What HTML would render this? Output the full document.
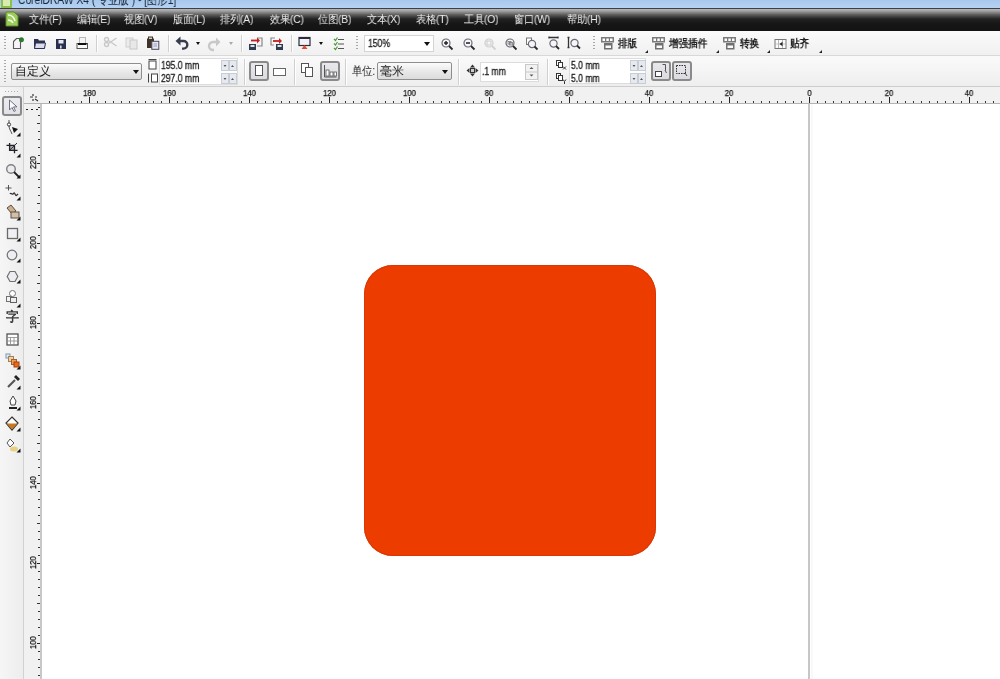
<!DOCTYPE html><html><head><meta charset="utf-8"><style>
*{margin:0;padding:0;box-sizing:border-box}
html,body{width:1000px;height:679px;overflow:hidden;background:#f0f0f0;font-family:"Liberation Sans",sans-serif;position:relative}
.t,.rl,.rv,#menu span,#title span{will-change:transform}
.a{position:absolute}
svg{position:absolute;overflow:visible}
#title{left:0;top:0;width:1000px;height:8px;background:linear-gradient(#a8c8ee,#b6d2f2);overflow:hidden}
#title span{position:absolute;left:18px;top:-7px;font-size:13px;line-height:14px;color:#1a2a3a;white-space:nowrap;transform:scaleX(0.79);transform-origin:0 0}
#menu{left:0;top:8px;width:1000px;height:23px;background:linear-gradient(#3c4048 0,#3c4048 1px,#b8b8b8 1px,#a0a0a0 3px,#585858 7px,#222 11px,#161616 16px,#141414 23px)}
#menu span{position:absolute;top:5px;color:#f0f0f0;font-size:11px;line-height:13px;white-space:nowrap;letter-spacing:-0.2px;transform:scaleX(0.93);transform-origin:0 0}
#tb1{left:0;top:31px;width:1000px;height:25px;background:linear-gradient(#fbfbfb,#f0f0f0);border-bottom:1px solid #d8d8d8}
#tb2{left:0;top:56px;width:1000px;height:31px;background:linear-gradient(#fafafa,#eeeeee);border-bottom:1px solid #cdcdcd}
#rulh{left:24px;top:87px;width:976px;height:17px;background:#f1f1f1;border-bottom:1px solid #b4b4b4}
#tbox{left:0;top:87px;width:24px;height:592px;background:linear-gradient(90deg,#f6f6f6,#ededed);border-right:1px solid #d2d2d2}
#rulv{left:24px;top:104px;width:18px;height:575px;background:#f1f1f1;border-right:2px solid #c8c8c8}
#canvas{left:42px;top:104px;width:959px;height:575px;background:#fff}
#pline{left:808px;top:104px;width:2px;height:575px;background:#c6c6c6;box-shadow:3px 0 0 #f9f9f9}
#rect{left:364px;top:265px;width:292px;height:291px;border-radius:29px;background:#ec3c00;box-shadow:inset 0 0 0 1px #d83804}
.sep{position:absolute;width:2px;border-left:1px solid #d0d0d0;border-right:1px solid #fff}
.grip{position:absolute;width:2px;background:repeating-linear-gradient(#a8a8a8 0 1px,transparent 1px 3px)}
.t{position:absolute;white-space:nowrap;color:#1a1a1a}
.box{position:absolute;background:#fff;border:1px solid #c8c8c8}
.btnp{position:absolute;border:2px solid #8a8a8a;border-radius:3px;background:linear-gradient(#e8e8ec,#dcdce0)}
.rl{position:absolute;font-size:9px;line-height:9px;color:#111;white-space:nowrap;transform:scaleX(0.86);-webkit-text-stroke:0.25px #111}
.rv{position:absolute;font-size:9px;line-height:9px;color:#111;white-space:nowrap;transform:rotate(-90deg) scaleX(0.85);transform-origin:0 0;-webkit-text-stroke:0.25px #111}
.tbt{top:37px;font-size:11px;line-height:13px;font-weight:bold;color:#202020;transform:scaleX(0.87);transform-origin:0 0}
.tri{position:absolute;width:0;height:0;border-left:3px solid transparent;border-right:3px solid transparent;border-top:3px solid #111}
</style></head><body>
<div id="title" class="a"><svg width="12" height="8" style="left:1px;top:0"><rect x="0" y="-4" width="11" height="12" fill="#8cc04a"/><rect x="2" y="-4" width="7" height="10" fill="#d8ecb0"/></svg><span>CorelDRAW X4 ( 专业版 ) - [图形1]</span></div>
<div id="menu" class="a">
<svg width="14" height="16" style="left:5px;top:3px"><path d="M1 1h8l4 4v10H1z" fill="#9ccc5a" stroke="#5a8a2a" stroke-width="1"/><path d="M3 4c3 0 6 2 7 6M3 9c2 0 4 1 5 3" stroke="#f4fce8" stroke-width="1.6" fill="none"/></svg>
<span style="left:29px">文件(F)</span>
<span style="left:77px">编辑(E)</span>
<span style="left:124px">视图(V)</span>
<span style="left:173px">版面(L)</span>
<span style="left:220px">排列(A)</span>
<span style="left:270px">效果(C)</span>
<span style="left:318px">位图(B)</span>
<span style="left:367px">文本(X)</span>
<span style="left:416px">表格(T)</span>
<span style="left:464px">工具(O)</span>
<span style="left:514px">窗口(W)</span>
<span style="left:567px">帮助(H)</span>
</div>
<div id="tb1" class="a"></div>
<div id="tb2" class="a"></div>
<div id="tbox" class="a"></div>
<div id="rulh" class="a"></div>
<div id="rulv" class="a"></div>
<div id="canvas" class="a"></div>
<div id="pline" class="a"></div>
<div id="rect" class="a"></div>
<svg width="1000" height="679" style="left:0;top:0"><rect x="49" y="101" width="1" height="2" fill="#333"/><rect x="57" y="101" width="1" height="2" fill="#333"/><rect x="65" y="101" width="1" height="2" fill="#333"/><rect x="73" y="101" width="1" height="2" fill="#333"/><rect x="81" y="101" width="1" height="2" fill="#333"/><rect x="89" y="97" width="1" height="6" fill="#222"/><rect x="97" y="101" width="1" height="2" fill="#333"/><rect x="105" y="101" width="1" height="2" fill="#333"/><rect x="113" y="101" width="1" height="2" fill="#333"/><rect x="121" y="101" width="1" height="2" fill="#333"/><rect x="129" y="101" width="1" height="2" fill="#333"/><rect x="137" y="101" width="1" height="2" fill="#333"/><rect x="145" y="101" width="1" height="2" fill="#333"/><rect x="153" y="101" width="1" height="2" fill="#333"/><rect x="161" y="101" width="1" height="2" fill="#333"/><rect x="169" y="97" width="1" height="6" fill="#222"/><rect x="177" y="101" width="1" height="2" fill="#333"/><rect x="185" y="101" width="1" height="2" fill="#333"/><rect x="193" y="101" width="1" height="2" fill="#333"/><rect x="201" y="101" width="1" height="2" fill="#333"/><rect x="209" y="101" width="1" height="2" fill="#333"/><rect x="217" y="101" width="1" height="2" fill="#333"/><rect x="225" y="101" width="1" height="2" fill="#333"/><rect x="233" y="101" width="1" height="2" fill="#333"/><rect x="241" y="101" width="1" height="2" fill="#333"/><rect x="249" y="97" width="1" height="6" fill="#222"/><rect x="257" y="101" width="1" height="2" fill="#333"/><rect x="265" y="101" width="1" height="2" fill="#333"/><rect x="273" y="101" width="1" height="2" fill="#333"/><rect x="281" y="101" width="1" height="2" fill="#333"/><rect x="289" y="101" width="1" height="2" fill="#333"/><rect x="297" y="101" width="1" height="2" fill="#333"/><rect x="305" y="101" width="1" height="2" fill="#333"/><rect x="313" y="101" width="1" height="2" fill="#333"/><rect x="321" y="101" width="1" height="2" fill="#333"/><rect x="329" y="97" width="1" height="6" fill="#222"/><rect x="337" y="101" width="1" height="2" fill="#333"/><rect x="345" y="101" width="1" height="2" fill="#333"/><rect x="353" y="101" width="1" height="2" fill="#333"/><rect x="361" y="101" width="1" height="2" fill="#333"/><rect x="369" y="101" width="1" height="2" fill="#333"/><rect x="377" y="101" width="1" height="2" fill="#333"/><rect x="385" y="101" width="1" height="2" fill="#333"/><rect x="393" y="101" width="1" height="2" fill="#333"/><rect x="401" y="101" width="1" height="2" fill="#333"/><rect x="409" y="97" width="1" height="6" fill="#222"/><rect x="417" y="101" width="1" height="2" fill="#333"/><rect x="425" y="101" width="1" height="2" fill="#333"/><rect x="433" y="101" width="1" height="2" fill="#333"/><rect x="441" y="101" width="1" height="2" fill="#333"/><rect x="449" y="101" width="1" height="2" fill="#333"/><rect x="457" y="101" width="1" height="2" fill="#333"/><rect x="465" y="101" width="1" height="2" fill="#333"/><rect x="473" y="101" width="1" height="2" fill="#333"/><rect x="481" y="101" width="1" height="2" fill="#333"/><rect x="489" y="97" width="1" height="6" fill="#222"/><rect x="497" y="101" width="1" height="2" fill="#333"/><rect x="505" y="101" width="1" height="2" fill="#333"/><rect x="513" y="101" width="1" height="2" fill="#333"/><rect x="521" y="101" width="1" height="2" fill="#333"/><rect x="529" y="101" width="1" height="2" fill="#333"/><rect x="537" y="101" width="1" height="2" fill="#333"/><rect x="545" y="101" width="1" height="2" fill="#333"/><rect x="553" y="101" width="1" height="2" fill="#333"/><rect x="561" y="101" width="1" height="2" fill="#333"/><rect x="569" y="97" width="1" height="6" fill="#222"/><rect x="577" y="101" width="1" height="2" fill="#333"/><rect x="585" y="101" width="1" height="2" fill="#333"/><rect x="593" y="101" width="1" height="2" fill="#333"/><rect x="601" y="101" width="1" height="2" fill="#333"/><rect x="609" y="101" width="1" height="2" fill="#333"/><rect x="617" y="101" width="1" height="2" fill="#333"/><rect x="625" y="101" width="1" height="2" fill="#333"/><rect x="633" y="101" width="1" height="2" fill="#333"/><rect x="641" y="101" width="1" height="2" fill="#333"/><rect x="649" y="97" width="1" height="6" fill="#222"/><rect x="657" y="101" width="1" height="2" fill="#333"/><rect x="665" y="101" width="1" height="2" fill="#333"/><rect x="673" y="101" width="1" height="2" fill="#333"/><rect x="681" y="101" width="1" height="2" fill="#333"/><rect x="689" y="101" width="1" height="2" fill="#333"/><rect x="697" y="101" width="1" height="2" fill="#333"/><rect x="705" y="101" width="1" height="2" fill="#333"/><rect x="713" y="101" width="1" height="2" fill="#333"/><rect x="721" y="101" width="1" height="2" fill="#333"/><rect x="729" y="97" width="1" height="6" fill="#222"/><rect x="737" y="101" width="1" height="2" fill="#333"/><rect x="745" y="101" width="1" height="2" fill="#333"/><rect x="753" y="101" width="1" height="2" fill="#333"/><rect x="761" y="101" width="1" height="2" fill="#333"/><rect x="769" y="101" width="1" height="2" fill="#333"/><rect x="777" y="101" width="1" height="2" fill="#333"/><rect x="785" y="101" width="1" height="2" fill="#333"/><rect x="793" y="101" width="1" height="2" fill="#333"/><rect x="801" y="101" width="1" height="2" fill="#333"/><rect x="809" y="97" width="1" height="6" fill="#222"/><rect x="817" y="101" width="1" height="2" fill="#333"/><rect x="825" y="101" width="1" height="2" fill="#333"/><rect x="833" y="101" width="1" height="2" fill="#333"/><rect x="841" y="101" width="1" height="2" fill="#333"/><rect x="849" y="101" width="1" height="2" fill="#333"/><rect x="857" y="101" width="1" height="2" fill="#333"/><rect x="865" y="101" width="1" height="2" fill="#333"/><rect x="873" y="101" width="1" height="2" fill="#333"/><rect x="881" y="101" width="1" height="2" fill="#333"/><rect x="889" y="97" width="1" height="6" fill="#222"/><rect x="897" y="101" width="1" height="2" fill="#333"/><rect x="905" y="101" width="1" height="2" fill="#333"/><rect x="913" y="101" width="1" height="2" fill="#333"/><rect x="921" y="101" width="1" height="2" fill="#333"/><rect x="929" y="101" width="1" height="2" fill="#333"/><rect x="937" y="101" width="1" height="2" fill="#333"/><rect x="945" y="101" width="1" height="2" fill="#333"/><rect x="953" y="101" width="1" height="2" fill="#333"/><rect x="961" y="101" width="1" height="2" fill="#333"/><rect x="969" y="97" width="1" height="6" fill="#222"/><rect x="977" y="101" width="1" height="2" fill="#333"/><rect x="985" y="101" width="1" height="2" fill="#333"/><rect x="993" y="101" width="1" height="2" fill="#333"/><rect x="38" y="107" width="2" height="1" fill="#333"/><rect x="38" y="115" width="2" height="1" fill="#333"/><rect x="37" y="123" width="3" height="1" fill="#333"/><rect x="38" y="131" width="2" height="1" fill="#333"/><rect x="38" y="139" width="2" height="1" fill="#333"/><rect x="38" y="147" width="2" height="1" fill="#333"/><rect x="38" y="155" width="2" height="1" fill="#333"/><rect x="37" y="163" width="3" height="1" fill="#222"/><rect x="38" y="171" width="2" height="1" fill="#333"/><rect x="38" y="179" width="2" height="1" fill="#333"/><rect x="38" y="187" width="2" height="1" fill="#333"/><rect x="38" y="195" width="2" height="1" fill="#333"/><rect x="37" y="203" width="3" height="1" fill="#333"/><rect x="38" y="211" width="2" height="1" fill="#333"/><rect x="38" y="219" width="2" height="1" fill="#333"/><rect x="38" y="227" width="2" height="1" fill="#333"/><rect x="38" y="235" width="2" height="1" fill="#333"/><rect x="37" y="243" width="3" height="1" fill="#222"/><rect x="38" y="251" width="2" height="1" fill="#333"/><rect x="38" y="259" width="2" height="1" fill="#333"/><rect x="38" y="267" width="2" height="1" fill="#333"/><rect x="38" y="275" width="2" height="1" fill="#333"/><rect x="37" y="283" width="3" height="1" fill="#333"/><rect x="38" y="291" width="2" height="1" fill="#333"/><rect x="38" y="299" width="2" height="1" fill="#333"/><rect x="38" y="307" width="2" height="1" fill="#333"/><rect x="38" y="315" width="2" height="1" fill="#333"/><rect x="37" y="323" width="3" height="1" fill="#222"/><rect x="38" y="331" width="2" height="1" fill="#333"/><rect x="38" y="339" width="2" height="1" fill="#333"/><rect x="38" y="347" width="2" height="1" fill="#333"/><rect x="38" y="355" width="2" height="1" fill="#333"/><rect x="37" y="363" width="3" height="1" fill="#333"/><rect x="38" y="371" width="2" height="1" fill="#333"/><rect x="38" y="379" width="2" height="1" fill="#333"/><rect x="38" y="387" width="2" height="1" fill="#333"/><rect x="38" y="395" width="2" height="1" fill="#333"/><rect x="37" y="403" width="3" height="1" fill="#222"/><rect x="38" y="411" width="2" height="1" fill="#333"/><rect x="38" y="419" width="2" height="1" fill="#333"/><rect x="38" y="427" width="2" height="1" fill="#333"/><rect x="38" y="435" width="2" height="1" fill="#333"/><rect x="37" y="443" width="3" height="1" fill="#333"/><rect x="38" y="451" width="2" height="1" fill="#333"/><rect x="38" y="459" width="2" height="1" fill="#333"/><rect x="38" y="467" width="2" height="1" fill="#333"/><rect x="38" y="475" width="2" height="1" fill="#333"/><rect x="37" y="483" width="3" height="1" fill="#222"/><rect x="38" y="491" width="2" height="1" fill="#333"/><rect x="38" y="499" width="2" height="1" fill="#333"/><rect x="38" y="507" width="2" height="1" fill="#333"/><rect x="38" y="515" width="2" height="1" fill="#333"/><rect x="37" y="523" width="3" height="1" fill="#333"/><rect x="38" y="531" width="2" height="1" fill="#333"/><rect x="38" y="539" width="2" height="1" fill="#333"/><rect x="38" y="547" width="2" height="1" fill="#333"/><rect x="38" y="555" width="2" height="1" fill="#333"/><rect x="37" y="563" width="3" height="1" fill="#222"/><rect x="38" y="571" width="2" height="1" fill="#333"/><rect x="38" y="579" width="2" height="1" fill="#333"/><rect x="38" y="587" width="2" height="1" fill="#333"/><rect x="38" y="595" width="2" height="1" fill="#333"/><rect x="37" y="603" width="3" height="1" fill="#333"/><rect x="38" y="611" width="2" height="1" fill="#333"/><rect x="38" y="619" width="2" height="1" fill="#333"/><rect x="38" y="627" width="2" height="1" fill="#333"/><rect x="38" y="635" width="2" height="1" fill="#333"/><rect x="37" y="643" width="3" height="1" fill="#222"/><rect x="38" y="651" width="2" height="1" fill="#333"/><rect x="38" y="659" width="2" height="1" fill="#333"/><rect x="38" y="667" width="2" height="1" fill="#333"/><rect x="38" y="675" width="2" height="1" fill="#333"/></svg>
<div class="rl" style="left:81.5px;top:89px;width:15px;text-align:center">180</div>
<div class="rl" style="left:161.5px;top:89px;width:15px;text-align:center">160</div>
<div class="rl" style="left:241.5px;top:89px;width:15px;text-align:center">140</div>
<div class="rl" style="left:321.5px;top:89px;width:15px;text-align:center">120</div>
<div class="rl" style="left:401.5px;top:89px;width:15px;text-align:center">100</div>
<div class="rl" style="left:484.0px;top:89px;width:10px;text-align:center">80</div>
<div class="rl" style="left:564.0px;top:89px;width:10px;text-align:center">60</div>
<div class="rl" style="left:644.0px;top:89px;width:10px;text-align:center">40</div>
<div class="rl" style="left:724.0px;top:89px;width:10px;text-align:center">20</div>
<div class="rl" style="left:806.5px;top:89px;width:5px;text-align:center">0</div>
<div class="rl" style="left:884.0px;top:89px;width:10px;text-align:center">20</div>
<div class="rl" style="left:964.0px;top:89px;width:10px;text-align:center">40</div>
<div class="rv" style="left:29px;top:168.5px;width:15px;text-align:center">220</div>
<div class="rv" style="left:29px;top:248.5px;width:15px;text-align:center">200</div>
<div class="rv" style="left:29px;top:328.5px;width:15px;text-align:center">180</div>
<div class="rv" style="left:29px;top:408.5px;width:15px;text-align:center">160</div>
<div class="rv" style="left:29px;top:488.5px;width:15px;text-align:center">140</div>
<div class="rv" style="left:29px;top:568.5px;width:15px;text-align:center">120</div>
<div class="rv" style="left:29px;top:648.5px;width:15px;text-align:center">100</div>
<div class="grip" style="left:4px;top:36px;height:15px"></div>
<svg width="13" height="14" style="left:12px;top:36px"><path d="M1.5 5.5L4.5 2.5H8.5V12.5H1.5Z" fill="#f6f4f8" stroke="#5a5a5a" stroke-width="1.1"/><circle cx="9.4" cy="3.8" r="2.5" fill="#2e7a2e"/></svg>
<svg width="14" height="13" style="left:33px;top:37px"><path d="M1 2h4l1 1.5h6v8H1z" fill="#2a3450"/><path d="M2.5 6h10l-1 5.5h-10z" fill="#dcdcec" stroke="#2a3450"/></svg>
<svg width="10" height="10" style="left:56px;top:39px"><rect x="0" y="0" width="10" height="10" fill="#2a3050"/><rect x="2.5" y="1" width="5" height="3.5" fill="#e8e8f4"/><rect x="4" y="6.5" width="1.6" height="3" fill="#dcdcec"/></svg>
<svg width="12" height="14" style="left:76px;top:36px"><rect x="3.5" y="1.5" width="6" height="6" fill="#f4f4f4" stroke="#b8b8b8"/><rect x="1" y="7.5" width="10.5" height="5" fill="#fafafa" stroke="#555"/><rect x="2" y="7" width="8.5" height="2" fill="#111"/></svg>
<div class="sep" style="left:96px;top:35px;height:17px"></div>
<svg width="15" height="14" style="left:103px;top:36px"><circle cx="3.5" cy="8.5" r="2" fill="none" stroke="#c8c8c8" stroke-width="1.4"/><circle cx="3.5" cy="3.5" r="2" fill="none" stroke="#c8c8c8" stroke-width="1.4"/><path d="M5.5 7.5l8-5.5M5.5 4.5l8 5.5" stroke="#c8c8c8" stroke-width="1.3"/></svg>
<svg width="14" height="13" style="left:125px;top:37px"><rect x="1" y="1" width="7" height="9" fill="#ececec" stroke="#cfcfcf"/><rect x="5" y="3" width="7" height="9" fill="#e8e8e8" stroke="#c8c8c8"/></svg>
<svg width="15" height="14" style="left:146px;top:36px"><rect x="1" y="2.5" width="7" height="9.5" fill="#3e342c"/><rect x="2.5" y="1" width="4" height="2.5" fill="#d8d0c0" stroke="#3e342c"/><rect x="5.8" y="5.3" width="7" height="8" fill="#e4e6f2" stroke="#4a4a5a"/><path d="M7.5 8h3.5M7.5 10h3.5" stroke="#9a9ab8"/></svg>
<div class="sep" style="left:168px;top:35px;height:17px"></div>
<svg width="15" height="14" style="left:175px;top:36px"><path d="M4 5h4.5a3.8 3.8 0 0 1 0 7.6H7" fill="none" stroke="#383c4c" stroke-width="2.4"/><path d="M0.5 5l5-4.5v9z" fill="#383c4c"/></svg>
<div class="tri" style="left:196px;top:42px;border-left-width:2.5px;border-right-width:2.5px;border-top-color:#111"></div>
<svg width="13" height="13" style="left:208px;top:37px"><path d="M9 5H5a4 4 0 0 0 0 8h1" fill="none" stroke="#c8c8c8" stroke-width="2.4"/><path d="M12.5 5l-4.5-4.5v9z" fill="#c8c8c8"/></svg>
<div class="tri" style="left:229px;top:42px;border-left-width:2.5px;border-right-width:2.5px;border-top-color:#aaa"></div>
<div class="sep" style="left:241px;top:35px;height:17px"></div>
<svg width="16" height="15" style="left:248px;top:36px"><path d="M9 2h5v8H9" fill="none" stroke="#888" stroke-width="1.2"/><path d="M3 4.5h7" stroke="#c42020" stroke-width="1.8"/><path d="M12 4.5l-3-3v6z" fill="#c42020"/><rect x="1" y="8" width="7" height="6" fill="#2e3a4e"/><rect x="2.5" y="9" width="4" height="2" fill="#e0e0e0"/></svg>
<svg width="16" height="15" style="left:269px;top:36px"><path d="M6 2H2v7h3" fill="none" stroke="#888" stroke-width="1.2"/><path d="M4 5h7" stroke="#c42020" stroke-width="1.8"/><path d="M13 5l-3-3v6z" fill="#c42020"/><rect x="7" y="8" width="7" height="6" fill="#2e3a4e"/><rect x="8.5" y="9" width="4" height="2" fill="#e0e0e0"/></svg>
<div class="sep" style="left:291px;top:35px;height:17px"></div>
<svg width="14" height="15" style="left:298px;top:36px"><rect x="1" y="1.5" width="11" height="8" fill="#f2f2f6" stroke="#2c2c3c" stroke-width="1.2"/><rect x="1" y="1" width="11" height="2" fill="#2c2c3c"/><path d="M6.5 9l-3 4h6z" fill="#e04a2a"/></svg>
<div class="tri" style="left:319px;top:42px;border-left-width:2.5px;border-right-width:2.5px;border-top-color:#111"></div>
<svg width="12" height="15" style="left:333px;top:36px"><path d="M1 3l1.5 1.5 2-3M1 7.5l1.5 1.5 2-3M1 12l1.5 1.5 2-3" stroke="#4a9a3a" fill="none" stroke-width="1.2"/><path d="M5 3.5h6M5 8h6M5 12.5h6" stroke="#555" stroke-width="1"/></svg>
<div class="grip" style="left:356px;top:36px;height:15px"></div>
<div class="box" style="left:364px;top:35px;width:70px;height:17px;border-color:#d4d4d4"></div>
<div class="t" style="left:368px;top:38px;font-size:10px;line-height:11px;transform:scaleX(0.86);transform-origin:0 0;-webkit-text-stroke:0.3px #1a1a1a">150%</div>
<div class="tri" style="left:424px;top:42px;border-left-width:3.5px;border-right-width:3.5px;border-top-width:4px"></div>
<svg width="13" height="13" style="left:441px;top:38px"><circle cx="5" cy="5" r="4" fill="#f6f6fa" stroke="#6a6a74" stroke-width="1.2"/><path d="M3 5h4M5 3v4" stroke="#222" stroke-width="1.4"/><path d="M8 8l3.5 3.5" stroke="#2a2a2a" stroke-width="1.8"/></svg>
<svg width="13" height="13" style="left:463px;top:38px"><circle cx="5" cy="5" r="4" fill="#f6f6fa" stroke="#6a6a74" stroke-width="1.2"/><path d="M3 5h4" stroke="#111" stroke-width="1.4"/><path d="M8 8l3.5 3.5" stroke="#2a2a2a" stroke-width="1.8"/></svg>
<svg width="13" height="13" style="left:484px;top:38px"><circle cx="5" cy="5" r="4" fill="#f6f6fa" stroke="#cfcfcf" stroke-width="1.2"/><rect x="3" y="3" width="4" height="4" fill="none" stroke="#ccc"/><path d="M8 8l3.5 3.5" stroke="#d0d0d0" stroke-width="1.8"/></svg>
<svg width="13" height="13" style="left:505px;top:38px"><circle cx="5" cy="5" r="4" fill="#f6f6fa" stroke="#6a6a74" stroke-width="1.2"/><rect x="3" y="3.5" width="3" height="2.5" fill="none" stroke="#777" stroke-width="0.8"/><rect x="4.5" y="4.5" width="3" height="2.5" fill="none" stroke="#777" stroke-width="0.8"/><path d="M8 8l3.5 3.5" stroke="#2a2a2a" stroke-width="1.8"/></svg>
<svg width="14" height="14" style="left:525px;top:36px"><rect x="1.5" y="2" width="5" height="6.5" fill="#fff" stroke="#777"/><circle cx="7" cy="8" r="3.6" fill="#f6f6fa" stroke="#6a6a74" stroke-width="1.2"/><path d="M9.5 10.5l3 3" stroke="#2a2a2a" stroke-width="1.8"/></svg>
<svg width="13" height="14" style="left:548px;top:36px"><path d="M0.5 1.5h10M1 0.5v2M10 0.5v2" stroke="#333" stroke-width="1.3"/><circle cx="5.5" cy="7.5" r="3.6" fill="#f6f6fa" stroke="#6a6a74" stroke-width="1.2"/><path d="M8 10l3 3" stroke="#2a2a2a" stroke-width="1.8"/></svg>
<svg width="15" height="14" style="left:567px;top:36px"><path d="M1.5 1v11M0.5 1.5h2M0.5 11.5h2" stroke="#333" stroke-width="1.3"/><circle cx="7.5" cy="7" r="3.6" fill="#f6f6fa" stroke="#6a6a74" stroke-width="1.2"/><path d="M10 9.5l3 3" stroke="#2a2a2a" stroke-width="1.8"/></svg>
<div class="grip" style="left:593px;top:36px;height:15px"></div>
<svg width="15" height="14" style="left:600px;top:36px"><rect x="1" y="1" width="13" height="5.5" fill="#7a7a7a"/><rect x="2.5" y="2.5" width="2.5" height="2.5" fill="#fff"/><rect x="6.3" y="2.5" width="2.5" height="2.5" fill="#fff"/><rect x="10" y="2.5" width="2.5" height="2.5" fill="#fff"/><rect x="4" y="7" width="8.5" height="6.5" fill="#707070"/><rect x="5.5" y="9.5" width="5.5" height="2.5" fill="#fbfbfb"/></svg>
<div class="t tbt" style="left:618px">排版</div>
<div class="tri" style="left:645px;top:50px;border-left:0;border-right:3px solid #222;border-top:3px solid transparent"></div>
<svg width="15" height="14" style="left:651px;top:36px"><rect x="1" y="1" width="13" height="5.5" fill="#7a7a7a"/><rect x="2.5" y="2.5" width="2.5" height="2.5" fill="#fff"/><rect x="6.3" y="2.5" width="2.5" height="2.5" fill="#fff"/><rect x="10" y="2.5" width="2.5" height="2.5" fill="#fff"/><rect x="4" y="7" width="8.5" height="6.5" fill="#707070"/><rect x="5.5" y="9.5" width="5.5" height="2.5" fill="#fbfbfb"/></svg>
<div class="t tbt" style="left:669px">增强插件</div>
<div class="tri" style="left:716px;top:50px;border-left:0;border-right:3px solid #222;border-top:3px solid transparent"></div>
<svg width="15" height="14" style="left:722px;top:36px"><rect x="1" y="1" width="13" height="5.5" fill="#7a7a7a"/><rect x="2.5" y="2.5" width="2.5" height="2.5" fill="#fff"/><rect x="6.3" y="2.5" width="2.5" height="2.5" fill="#fff"/><rect x="10" y="2.5" width="2.5" height="2.5" fill="#fff"/><rect x="4" y="7" width="8.5" height="6.5" fill="#707070"/><rect x="5.5" y="9.5" width="5.5" height="2.5" fill="#fbfbfb"/></svg>
<div class="t tbt" style="left:740px">转换</div>
<div class="tri" style="left:767px;top:50px;border-left:0;border-right:3px solid #222;border-top:3px solid transparent"></div>
<svg width="13" height="12" style="left:774px;top:38px"><rect x="1" y="1.5" width="11" height="9" fill="#fafafa" stroke="#777" stroke-width="1"/><path d="M4.5 1.5v9M8.5 1.5v9" stroke="#666" stroke-width="0.9" stroke-dasharray="1 1"/><path d="M1 6h11" stroke="#aaa" stroke-width="0.6"/><path d="M5.5 6l3-2.2v4.4z" fill="#222"/></svg>
<div class="t tbt" style="left:790px">贴齐</div>
<div class="tri" style="left:819px;top:50px;border-left:0;border-right:3px solid #222;border-top:3px solid transparent"></div>
<div class="grip" style="left:4px;top:60px;height:23px"></div>
<div class="a" style="left:11px;top:63px;width:131px;height:17px;border:1px solid #8e8e8e;border-radius:2px;background:linear-gradient(#fbfbfb,#e6e6e6 60%,#dcdcdc)"></div>
<div class="t" style="left:15px;top:65px;font-size:12px;line-height:13px">自定义</div>
<div class="tri" style="left:133px;top:70px;border-left-width:3.5px;border-right-width:3.5px;border-top-width:4px"></div>
<svg width="12" height="28" style="left:147px;top:58px"><rect x="2" y="3" width="7" height="8" fill="#fff" stroke="#444"/><path d="M1.5 1.5h8" stroke="#444"/><rect x="4.5" y="16" width="6" height="8" fill="#fff" stroke="#444"/><path d="M1.5 15.5v9" stroke="#444"/></svg>
<div class="box" style="left:159px;top:58px;width:79px;height:27px;border-color:#dcdcdc"></div>
<div class="t" style="left:161px;top:60px;font-size:10px;line-height:11px;transform:scaleX(0.86);transform-origin:0 0;-webkit-text-stroke:0.3px #1a1a1a">195.0 mm</div>
<div class="t" style="left:161px;top:73px;font-size:10px;line-height:11px;transform:scaleX(0.86);transform-origin:0 0;-webkit-text-stroke:0.3px #1a1a1a">297.0 mm</div>
<div class="a" style="left:221px;top:60px;width:8px;height:11px;border:1px solid #c8ccd4;background:#e6eaf0"></div>
<div class="a" style="left:229px;top:60px;width:8px;height:11px;border:1px solid #c8ccd4;background:#e6eaf0"></div>
<div class="a" style="left:221px;top:73px;width:8px;height:11px;border:1px solid #c8ccd4;background:#e6eaf0"></div>
<div class="a" style="left:229px;top:73px;width:8px;height:11px;border:1px solid #c8ccd4;background:#e6eaf0"></div>
<svg width="16" height="26" style="left:221px;top:60px"><path d="M2.5 5h3l-1.5 2z" fill="#555"/><path d="M10 7h3l-1.5-2z" fill="#555"/><path d="M2.5 18h3l-1.5 2z" fill="#555"/><path d="M10 20h3l-1.5-2z" fill="#555"/></svg>
<div class="sep" style="left:244px;top:59px;height:26px"></div>
<div class="btnp" style="left:249px;top:61px;width:20px;height:20px"></div>
<svg width="12" height="14" style="left:253px;top:64px"><rect x="2.5" y="1.5" width="7" height="10" fill="#fff" stroke="#555"/></svg>
<svg width="16" height="14" style="left:272px;top:64px"><rect x="1.5" y="4.5" width="12" height="7" fill="#fff" stroke="#666"/></svg>
<div class="sep" style="left:294px;top:59px;height:26px"></div>
<svg width="17" height="17" style="left:300px;top:62px"><rect x="1.5" y="1.5" width="7" height="9" fill="#fff" stroke="#555"/><rect x="5.5" y="5.5" width="7" height="9" fill="#fff" stroke="#555"/></svg>
<div class="btnp" style="left:320px;top:61px;width:20px;height:20px"></div>
<svg width="15" height="14" style="left:323px;top:64px"><path d="M1.5 1v12h12" fill="none" stroke="#555"/><rect x="3" y="6" width="3" height="6" fill="#fff" stroke="#555" stroke-width="0.8"/><rect x="7" y="8" width="3" height="4" fill="#fff" stroke="#555" stroke-width="0.8"/><rect x="11" y="8" width="2.5" height="4" fill="#fff" stroke="#555" stroke-width="0.8"/></svg>
<div class="sep" style="left:345px;top:59px;height:26px"></div>
<div class="t" style="left:352px;top:65px;font-size:12px;line-height:13px;transform:scaleX(0.85);transform-origin:0 0">单位:</div>
<div class="a" style="left:377px;top:62px;width:75px;height:18px;border:1px solid #8e8e8e;border-radius:2px;background:linear-gradient(#fbfbfb,#e6e6e6 60%,#dcdcdc)"></div>
<div class="t" style="left:380px;top:65px;font-size:12px;line-height:13px">毫米</div>
<div class="tri" style="left:442px;top:70px;border-left-width:3.5px;border-right-width:3.5px;border-top-width:4px"></div>
<div class="sep" style="left:458px;top:59px;height:26px"></div>
<svg width="13" height="13" style="left:466px;top:64px"><path d="M6.5 0.5l2.5 3h-5zM6.5 12.5l2.5-3h-5zM0.5 6.5l3-2.5v5zM12.5 6.5l-3-2.5v5z" fill="#333"/><rect x="4.5" y="4.5" width="4" height="4" fill="#ccc" stroke="#333"/></svg>
<div class="box" style="left:480px;top:62px;width:59px;height:20px;border-color:#dcdcdc"></div>
<div class="t" style="left:482px;top:66px;font-size:10px;line-height:11px;transform:scaleX(0.86);transform-origin:0 0;-webkit-text-stroke:0.3px #1a1a1a">.1 mm</div>
<div class="a" style="left:525px;top:64px;width:13px;height:16px;border:1px solid #c8c8c8;background:#f2f2f2"></div>
<svg width="13" height="16" style="left:525px;top:64px"><path d="M1 8h11" stroke="#c8c8c8"/><path d="M4.5 5l2-2 2 2z" fill="#555"/><path d="M4.5 10.5h4l-2 2z" fill="#555"/></svg>
<div class="sep" style="left:547px;top:59px;height:26px"></div>
<svg width="14" height="27" style="left:555px;top:59px"><rect x="1.5" y="1.5" width="4" height="5" fill="#fff" stroke="#333"/><rect x="3.5" y="3.5" width="4" height="5" fill="#fff" stroke="#333"/><path d="M8 7.5l3 3M11 7.5l-3 3" stroke="#333"/><rect x="1.5" y="14.5" width="4" height="5" fill="#fff" stroke="#333"/><rect x="3.5" y="16.5" width="4" height="5" fill="#fff" stroke="#333"/><path d="M8 20.5l1.5 2 1.5-2M9.5 22.5v2.5" stroke="#333" fill="none"/></svg>
<div class="box" style="left:569px;top:58px;width:77px;height:26px;border-color:#dcdcdc"></div>
<div class="t" style="left:571px;top:60px;font-size:10px;line-height:11px;transform:scaleX(0.86);transform-origin:0 0;-webkit-text-stroke:0.3px #1a1a1a">5.0 mm</div>
<div class="t" style="left:571px;top:73px;font-size:10px;line-height:11px;transform:scaleX(0.86);transform-origin:0 0;-webkit-text-stroke:0.3px #1a1a1a">5.0 mm</div>
<div class="a" style="left:630px;top:60px;width:8px;height:11px;border:1px solid #c8ccd4;background:#e6eaf0"></div>
<div class="a" style="left:638px;top:60px;width:8px;height:11px;border:1px solid #c8ccd4;background:#e6eaf0"></div>
<div class="a" style="left:630px;top:73px;width:8px;height:11px;border:1px solid #c8ccd4;background:#e6eaf0"></div>
<div class="a" style="left:638px;top:73px;width:8px;height:11px;border:1px solid #c8ccd4;background:#e6eaf0"></div>
<svg width="16" height="26" style="left:630px;top:60px"><path d="M2.5 5h3l-1.5 2z" fill="#555"/><path d="M10 7h3l-1.5-2z" fill="#555"/><path d="M2.5 18h3l-1.5 2z" fill="#555"/><path d="M10 20h3l-1.5-2z" fill="#555"/></svg>
<div class="btnp" style="left:651px;top:61px;width:20px;height:20px"></div>
<svg width="16" height="16" style="left:653px;top:63px"><rect x="2.5" y="8.5" width="6" height="5" fill="#fff" stroke="#444"/><path d="M9.5 1.5h3v6M12 7l1.5 3" stroke="#555" fill="none"/></svg>
<div class="btnp" style="left:672px;top:61px;width:20px;height:20px"></div>
<svg width="16" height="16" style="left:674px;top:63px"><rect x="2.5" y="2.5" width="9" height="8" fill="none" stroke="#333" stroke-dasharray="1.5 1"/><path d="M11 10l2 3" stroke="#444"/></svg>
<div class="a" style="left:5px;top:91px;width:15px;height:1px;background:repeating-linear-gradient(90deg,#b0b0b0 0 1px,transparent 1px 3px)"></div>
<div class="btnp" style="left:2px;top:96px;width:20px;height:20px;background:linear-gradient(#ececf0,#e2e2e6)"></div>
<svg width="10" height="14" style="left:8px;top:99px"><path d="M1.5 1v10l2.5-2.5 2 4 1.5-0.8-2-3.8h3.5z" fill="#fbfbff" stroke="#707080" stroke-width="1"/></svg>
<svg width="15" height="17" style="left:6px;top:119px"><path d="M3 1v3M3 7c0 3 2 5 3 8" stroke="#555" fill="none"/><circle cx="3" cy="5.5" r="1.6" fill="#fff" stroke="#333"/><path d="M6 8l6 2-4 4z" fill="#111"/></svg>
<svg width="5" height="5" style="left:16px;top:132px"><path d="M4.5 0.5v4h-4z" fill="#111"/></svg>
<svg width="16" height="15" style="left:5px;top:141px"><rect x="4.6" y="4.4" width="4.9" height="4.9" fill="#a8a8b8"/><path d="M1.5 4.4h8.5M4.6 2v7.3h8M9.5 4.4v7.8" stroke="#222" stroke-width="1.3" fill="none"/><path d="M4.6 9.3L12 2" stroke="#333" stroke-width="1"/></svg>
<svg width="5" height="5" style="left:16px;top:153px"><path d="M4.5 0.5v4h-4z" fill="#111"/></svg>
<svg width="16" height="15" style="left:5px;top:163px"><circle cx="6" cy="6" r="4.3" fill="#ececf0" stroke="#808080" stroke-width="1.4"/><path d="M9 9l5 5" stroke="#222" stroke-width="1.8"/></svg>
<svg width="5" height="5" style="left:16px;top:174px"><path d="M4.5 0.5v4h-4z" fill="#111"/></svg>
<svg width="17" height="16" style="left:5px;top:184px"><path d="M3.5 1v5.5M0.5 4h6" stroke="#555" stroke-width="1"/><path d="M5 10c1-2 2 1 3 0s1-2 2 0 1 2 3 0" stroke="#333" fill="none" stroke-width="1.3"/></svg>
<svg width="5" height="5" style="left:16px;top:196px"><path d="M4.5 0.5v4h-4z" fill="#111"/></svg>
<svg width="16" height="16" style="left:5px;top:204px"><path d="M2 4l4-3 5 6-4 3z" fill="#c8b090" stroke="#5a4a3a"/><rect x="6" y="8" width="8" height="6" fill="#d4c0a0" stroke="#5a5050"/></svg>
<svg width="5" height="5" style="left:16px;top:216px"><path d="M4.5 0.5v4h-4z" fill="#111"/></svg>
<svg width="15" height="14" style="left:6px;top:227px"><rect x="1.5" y="1.5" width="10" height="10" fill="#f0f0f4" stroke="#6a6a6a" stroke-width="1.3"/></svg>
<svg width="5" height="5" style="left:16px;top:237px"><path d="M4.5 0.5v4h-4z" fill="#111"/></svg>
<svg width="15" height="14" style="left:6px;top:249px"><ellipse cx="6" cy="6" rx="4.8" ry="4.8" fill="#eeeef2" stroke="#707070" stroke-width="1.2"/></svg>
<svg width="5" height="5" style="left:16px;top:258px"><path d="M4.5 0.5v4h-4z" fill="#111"/></svg>
<svg width="15" height="14" style="left:6px;top:270px"><path d="M4 1.5h5l2.8 5-2.8 5H4L1.2 6.5z" fill="#eeeef2" stroke="#707070" stroke-width="1.2"/></svg>
<svg width="5" height="5" style="left:16px;top:279px"><path d="M4.5 0.5v4h-4z" fill="#111"/></svg>
<svg width="16" height="17" style="left:5px;top:289px"><circle cx="7.5" cy="4.5" r="3" fill="#fff" stroke="#707070"/><rect x="1.5" y="7.5" width="5" height="5" fill="#f4f4f4" stroke="#707070"/><rect x="5.5" y="8.5" width="6" height="5" fill="#eeeef2" stroke="#606060"/></svg>
<svg width="5" height="5" style="left:16px;top:303px"><path d="M4.5 0.5v4h-4z" fill="#111"/></svg>
<div class="t" style="left:6px;top:310px;font-size:13px;line-height:14px;color:#3a3a3a;font-weight:bold">字</div>
<svg width="13" height="13" style="left:6px;top:333px"><rect x="1" y="1" width="11" height="11" fill="#fff" stroke="#555" stroke-width="1.3"/><path d="M1 4.5h11M1 8h11M4.5 4.5v7.5M8 4.5v7.5" stroke="#888" stroke-width="0.8"/></svg>
<svg width="17" height="16" style="left:5px;top:353px"><rect x="1" y="1" width="4" height="4" fill="#e4ecf4" stroke="#7a9aa8"/><rect x="3.5" y="3.5" width="5" height="5" fill="#f4d0a0" stroke="#a08060"/><rect x="6.5" y="6.5" width="5" height="5" fill="#f0a050" stroke="#a06030"/><rect x="9" y="9" width="5" height="5" fill="#e86a18" stroke="#a04010"/></svg>
<svg width="5" height="5" style="left:16px;top:365px"><path d="M4.5 0.5v4h-4z" fill="#111"/></svg>
<svg width="15" height="15" style="left:6px;top:374px"><path d="M2 13l7-7" stroke="#555" stroke-width="2.2"/><path d="M8 3l4 4 2-2-4-4z" fill="#222"/></svg>
<svg width="5" height="5" style="left:16px;top:385px"><path d="M4.5 0.5v4h-4z" fill="#111"/></svg>
<svg width="13" height="16" style="left:8px;top:395px"><path d="M5 1l3 5-1 4H3L2 6z" fill="#fff" stroke="#444"/><path d="M1 13h8" stroke="#222" stroke-width="2"/></svg>
<svg width="5" height="5" style="left:16px;top:406px"><path d="M4.5 0.5v4h-4z" fill="#111"/></svg>
<svg width="17" height="16" style="left:4px;top:416px"><path d="M8 1l6 6-6 7-6-7z" fill="#fff" stroke="#333" stroke-width="1.2"/><path d="M2.5 7.5h11l-5.5 6z" fill="#c87820"/></svg>
<svg width="5" height="5" style="left:16px;top:427px"><path d="M4.5 0.5v4h-4z" fill="#111"/></svg>
<svg width="15" height="15" style="left:6px;top:438px"><path d="M4 1l4 4-4 4-3-4z" fill="#fff" stroke="#555"/><ellipse cx="8" cy="11" rx="4" ry="2.5" fill="#e8d080"/></svg>
<svg width="5" height="5" style="left:16px;top:448px"><path d="M4.5 0.5v4h-4z" fill="#111"/></svg>
<svg width="10" height="9" style="left:29px;top:93px"><path d="M1 4h3M6 4h2M4 1v2M4 6v2M6 6l3 2" stroke="#333" stroke-width="1.2"/></svg>
<div class="a" style="left:26px;top:109px;width:14px;height:1px;background:repeating-linear-gradient(90deg,#222 0 2px,transparent 2px 5px)"></div>
</body></html>
